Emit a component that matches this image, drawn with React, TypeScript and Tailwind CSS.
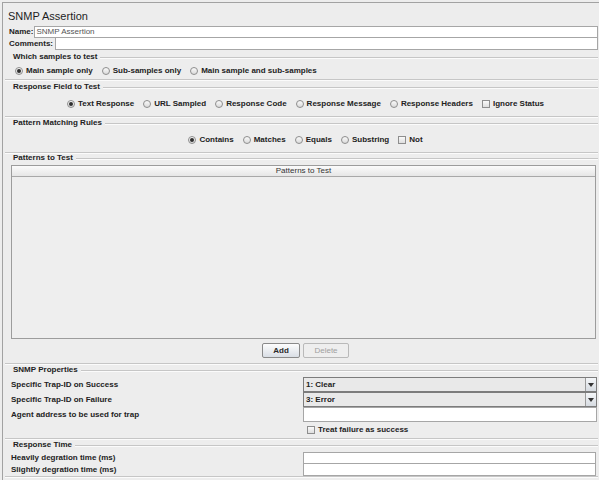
import type { ReactNode } from "react";

function Radio({ label, checked = false }: { label: string; checked?: boolean }) {
  return (
    <span className="flex items-center gap-[3px]">
      <span className="flex h-[8px] w-[8px] items-center justify-center rounded-full border border-[#8e8e8e] bg-linear-to-b from-[#fafafa] to-[#dadada]">
        {checked && <span className="h-[4px] w-[4px] rounded-full bg-[#2f2f2f]" />}
      </span>
      <span className="font-bold">{label}</span>
    </span>
  );
}

function Check({ label }: { label: string }) {
  return (
    <span className="flex items-center gap-[3px]">
      <span className="h-[8px] w-[8px] border border-[#8e8e8e] bg-linear-to-b from-[#fafafa] to-[#dedede]" />
      <span className="font-bold">{label}</span>
    </span>
  );
}

function Group({ title, className = "", children }: { title: string; className?: string; children: ReactNode }) {
  return (
    <div className={`border-b border-[#c6c6c6] shadow-[0_1px_0_#fbfbfb] ${className}`}>
      <div className="flex h-[10px] items-center pl-[8px]">
        <span className="font-bold leading-[10px]">{title}</span>
        <span className="ml-[3px] h-px flex-1 bg-[#c6c6c6] shadow-[0_1px_0_#fbfbfb]" />
      </div>
      {children}
    </div>
  );
}

function Combo({ value }: { value: string }) {
  return (
    <div className="flex h-[15px] items-stretch border border-[#7c7c7c] bg-[#e9e9e9]">
      <span className="flex flex-1 items-center pl-[2px] font-bold">{value}</span>
      <span className="flex w-[11px] items-center justify-center border-l border-[#9a9a9a] bg-linear-to-b from-[#f4f6f8] to-[#d6dbe1]">
        <span className="h-0 w-0 border-x-[3px] border-t-[4px] border-x-transparent border-t-[#333]" />
      </span>
    </div>
  );
}

export default function App() {
  return (
    <div className="h-[480px] w-[599px] overflow-hidden bg-[#ededed] pl-[2px] pt-[2px] font-['Liberation_Sans',Arial,sans-serif] text-[8px] text-[#222]">
      <div className="h-full border-l border-t border-[#a2a2a2] pl-[2px] pr-[1px]">
        <div className="mt-[5px] h-[16px] pl-[3px] text-[11px] leading-[16px] text-[#1e1e1e]">SNMP Assertion</div>

        <div className="mt-[2px] flex h-[12px] items-stretch">
          <span className="flex items-center pl-[4px] pr-[1px] font-bold">Name:</span>
          <span className="flex flex-1 items-center border border-[#a6a6a6] bg-white pl-[1px] text-[#555]">SNMP Assertion</span>
        </div>
        <div className="flex h-[12px] items-stretch">
          <span className="flex items-center pl-[4px] pr-[2px] font-bold">Comments:</span>
          <span className="flex-1 border border-t-0 border-[#a6a6a6] bg-white" />
        </div>

        <Group title="Which samples to test" className="mt-[2px]">
          <div className="flex h-[17px] items-center gap-[9px] pl-[10px]">
            <Radio label="Main sample only" checked />
            <Radio label="Sub-samples only" />
            <Radio label="Main sample and sub-samples" />
          </div>
        </Group>

        <Group title="Response Field to Test" className="mt-[2px]">
          <div className="flex h-[24px] items-center justify-center gap-[9px] pl-[8px]">
            <Radio label="Text Response" checked />
            <Radio label="URL Sampled" />
            <Radio label="Response Code" />
            <Radio label="Response Message" />
            <Radio label="Response Headers" />
            <Check label="Ignore Status" />
          </div>
        </Group>

        <Group title="Pattern Matching Rules" className="mt-[1px]">
          <div className="flex h-[24px] items-center justify-center gap-[9px] pl-[8px]">
            <Radio label="Contains" checked />
            <Radio label="Matches" />
            <Radio label="Equals" />
            <Radio label="Substring" />
            <Check label="Not" />
          </div>
        </Group>

        <Group title="Patterns to Test" className="pb-[5px]">
          <div className="ml-[6px] mr-[2px] mt-[2px] h-[174px] border border-[#9c9c9c] bg-[#eeeeee]">
            <div className="flex h-[11px] items-center justify-center border-b border-[#a8a8a8] bg-linear-to-b from-[#fbfbfb] to-[#e6e6e6] text-[#333]">
              Patterns to Test
            </div>
          </div>
          <div className="mt-[4px] flex h-[15px] justify-center gap-[3px] pl-[8px]">
            <button className="w-[38px] rounded-[2px] border border-[#8a8a8a] bg-linear-to-b from-[#fdfdfd] to-[#d9dee5] font-bold text-[#2a2a2a]">
              Add
            </button>
            <button className="w-[46px] rounded-[2px] border border-[#b9b9b9] bg-[#eeeeee] text-[#a0a0a0]">Delete</button>
          </div>
        </Group>

        <Group title="SNMP Properties" className="mt-[1px]">
          <div className="mt-[2px] grid grid-cols-[292px_1fr] pl-[6px] pr-[1px]">
            <span className="flex h-[15px] items-center font-bold">Specific Trap-ID on Success</span>
            <Combo value="1: Clear" />
            <span className="flex h-[15px] items-center font-bold">Specific Trap-ID on Failure</span>
            <Combo value="3: Error" />
            <span className="flex h-[15px] items-center font-bold">Agent address to be used for trap</span>
            <span className="h-[15px] border border-[#a6a6a6] bg-white" />
            <span />
            <div className="flex h-[16px] items-center pl-[4px]">
              <Check label="Treat failure as success" />
            </div>
          </div>
        </Group>

        <Group title="Response Time" className="mt-[1px]">
          <div className="mt-[2px] grid grid-cols-[292px_1fr] pl-[6px] pr-[2px]">
            <span className="flex h-[12px] items-center font-bold">Heavily degration time (ms)</span>
            <span className="h-[12px] border border-[#a6a6a6] bg-white" />
            <span className="flex h-[12px] items-center font-bold">Slightly degration time (ms)</span>
            <span className="h-[12px] border border-t-0 border-[#a6a6a6] bg-white" />
          </div>
        </Group>
      </div>
    </div>
  );
}
